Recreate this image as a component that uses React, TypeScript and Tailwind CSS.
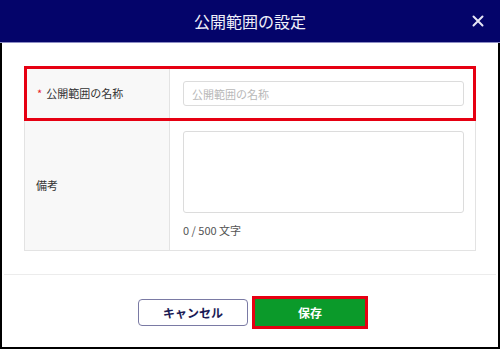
import React from 'react';

const font = { fontFamily: '"Noto Sans CJK JP", "Noto Sans", sans-serif' };

function CloseIcon() {
  return (
    <svg width="12" height="12" viewBox="0 0 12 12" className="text-[#e6e6f5]">
      <path d="M1.5 1.5 L10.5 10.5 M10.5 1.5 L1.5 10.5" stroke="currentColor" strokeWidth="2" strokeLinecap="round" />
    </svg>
  );
}

export default function App() {
  return (
    <div className="w-[500px] h-[349px] bg-white flex flex-col" style={font}>
      {/* ヘッダー */}
      <div className="h-[43px] bg-[#04046a] border-b border-[#8d8dc4] flex items-center justify-center relative">
        <h2 className="text-[16px] leading-none text-[#f0f0fa]">公開範囲の設定</h2>
        <button className="absolute right-[16px] top-[15px]">
          <CloseIcon />
        </button>
      </div>

      <div className="flex-1 flex flex-col border-x-2 border-b-2 border-black">
        <div className="pt-[23px] px-[22px]">
          <div className="border border-[#e3e3e3]">
            <div className="relative flex h-[53px]">
              <div className="w-[145px] bg-[#f8f8f8] border-r border-[#e3e3e3] flex items-center pl-[12px] text-[11px] text-[#333]">
                <span className="text-[#e8202a] mr-[4px]">*</span>
                公開範囲の名称
              </div>
              <div className="flex-1 flex items-center pl-[13px] pr-[11px]">
                <input
                  type="text"
                  placeholder="公開範囲の名称"
                  className="w-full h-[25px] border border-[#dcdcdc] rounded-[3px] px-[8px] text-[11px] placeholder:text-[#b8b8b8] outline-none"
                  style={font}
                />
              </div>
              <div className="absolute -inset-[1px] border-[3px] border-[#e60012] pointer-events-none"></div>
            </div>
            <div className="flex h-[130px] border-t border-[#e3e3e3]">
              <div className="w-[145px] bg-[#f8f8f8] border-r border-[#e3e3e3] flex items-center pl-[11px] text-[11px] text-[#333]">
                備考
              </div>
              <div className="flex-1 pl-[13px] pr-[11px] pt-[10px]">
                <textarea className="w-full h-[82px] block border border-[#dcdcdc] rounded-[3px] resize-none outline-none"></textarea>
                <div className="mt-[9px] text-[11px] leading-[16px] text-[#555]">0 / 500 文字</div>
              </div>
            </div>
          </div>
        </div>

        <div className="mt-[23px] mx-[2px] h-px bg-[#ececec]"></div>

        <div className="pt-[24px] flex justify-center gap-[7px] pl-[3px]">
          <button className="w-[110px] h-[27px] rounded-[4px] border border-[#7a7aa4] bg-white text-[12px] font-bold text-[#1b1b55]">
            キャンセル
          </button>
          <button className="w-[110px] h-[27px] bg-[#0b9a2a] text-[12px] font-bold text-white outline-[3px] outline-solid outline-[#e60012]">
            保存
          </button>
        </div>
      </div>
    </div>
  );
}
